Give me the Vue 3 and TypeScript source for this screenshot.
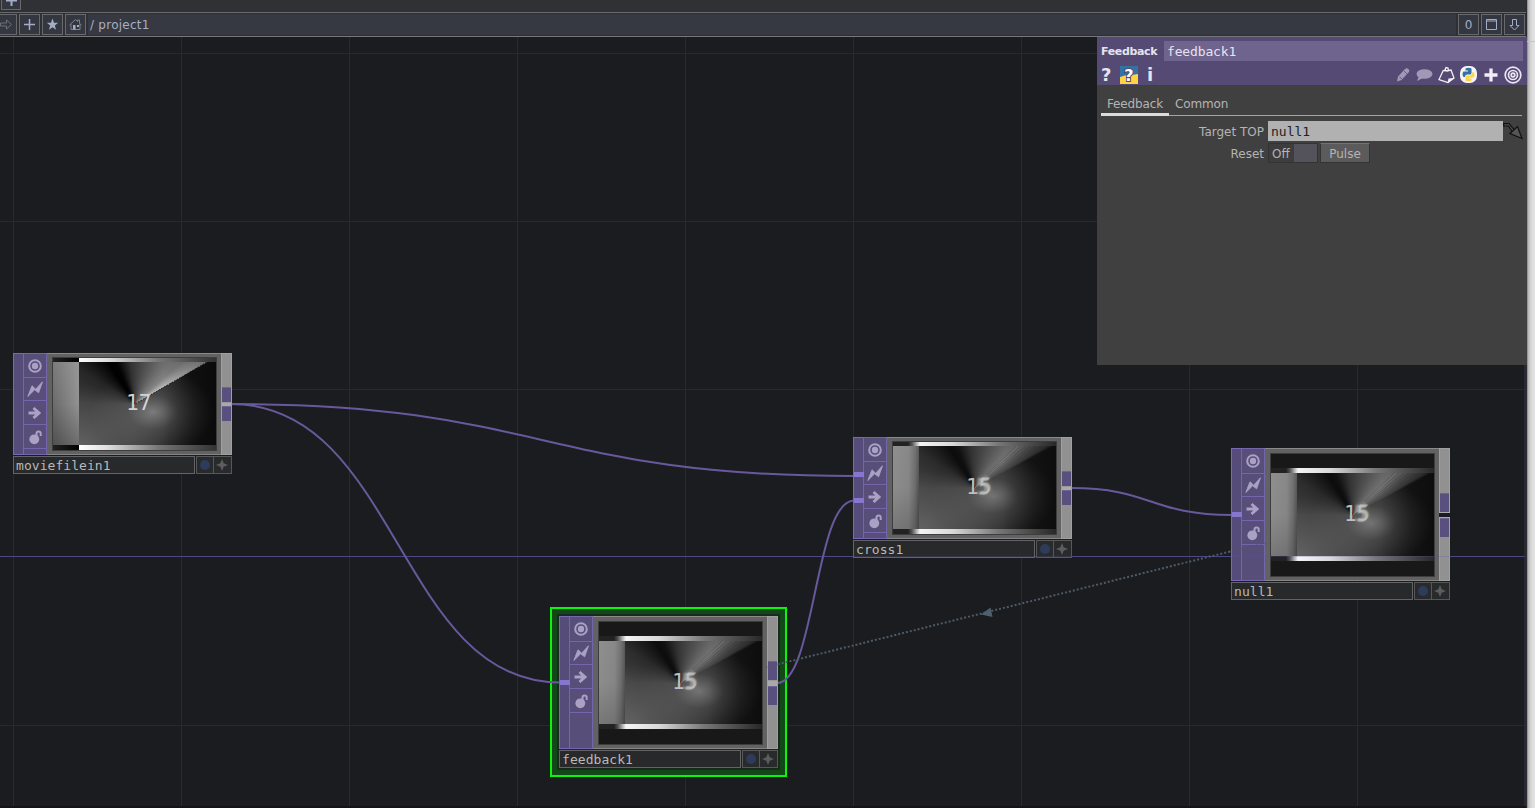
<script setup lang="ts">
interface OpNode {
  name: string
  x: number
  y: number
  tall: boolean
  inputs: number[]
  split: boolean
  soft: boolean
  count: [string, string]
}

const nodes: OpNode[] = [
  { name: 'moviefilein1', x: 13, y: 353, tall: false, inputs: [], split: false, soft: false, count: ['1', '7'] },
  { name: 'cross1', x: 853, y: 437, tall: false, inputs: [34, 60], split: false, soft: true, count: ['1', '5'] },
  { name: 'null1', x: 1231, y: 448, tall: true, inputs: [63], split: true, soft: true, count: ['1', '5'] },
  { name: 'feedback1', x: 559, y: 616, tall: true, inputs: [63], split: false, soft: true, count: ['1', '5'] },
]

const verticals = [13, 181, 349, 517, 685, 853, 1021, 1189, 1357]
const horizontals = [53, 221, 389, 725]
const rays = [0, 1, 2, 3, 4, 5, 6]
</script>

<template>
  <div class="app">
    <div class="main">
      <div class="topbar"><span class="btn tab"><svg width="19" height="19" viewBox="0 0 19 19"><path d="M9.5 4v11M4 9.5h11" class="ln thick" /></svg></span></div>
      <div class="toolbar">
        <span class="btn first"><svg width="19" height="19" viewBox="0 0 19 19"><path d="M3.5 8h6V5l5 4.5-5 4.5v-3h-6z" class="ln dim" /></svg></span>
        <span class="btn"><svg width="19" height="19" viewBox="0 0 19 19"><path d="M9.5 4v11M4 9.5h11" class="ln plus" /></svg></span>
        <span class="btn"><svg width="19" height="19" viewBox="0 0 19 19"><path d="M9.5 3.500l1.500 4.200h4.200l-3.400 2.700 1.300 4.400-3.600-2.600-3.600 2.600 1.300-4.400-3.400-2.700H8z" class="fill" /></svg></span>
        <span class="btn"><svg width="19" height="19" viewBox="0 0 19 19"><path d="M3.500 10l6-5.500 2 2V5h2v3.500l2 1.500M5 9v5.500h9V9" class="ln dim2" /><path d="M7 10h2.500v4.500H7zM11 10h2v2h-2z" class="fill" /></svg></span>
        <div class="path"><span>/ project1</span></div>
        <span class="btn zero">0</span>
        <span class="btn"><svg width="19" height="19" viewBox="0 0 19 19"><path d="M4.500 4.500h10v10h-10zM4 6h11" class="ln" /></svg></span>
        <span class="btn"><svg width="19" height="19" viewBox="0 0 19 19"><path d="M7.500 4.500h4v6h2.500l-4.500 4.500-4.500-4.500h2.500z" class="ln" /></svg></span>
      </div>
      <div class="network">
        <svg class="layer" width="1526" height="808" viewBox="0 0 1526 808">
          <g class="grid">
            <rect v-for="v in verticals" :key="'v' + v" :x="v" y="37" width="1" height="771" />
            <rect v-for="h in horizontals" :key="'h' + h" x="0" :y="h" width="1526" height="1" />
          </g>
          <rect x="0" y="556" width="1526" height="1" class="axis" />
          <rect x="1524" y="37" width="2" height="771" class="edge" />
          <rect x="0" y="806" width="1526" height="2" class="floor" />
        </svg>

        <div class="selection"><div class="selection-inner"></div></div>

        <svg class="layer" width="1526" height="808" viewBox="0 0 1526 808">
          <g class="wires">
            <path d="M231 404C542 404 542 476 854 476" />
            <path d="M231 404C398 404 398 682.500 560 682.500" />
            <path d="M1071 488C1151 488 1151 515 1232 515" />
            <path d="M777 683C815 683 815 500.500 854 500.500" />
          </g>
        </svg>

        <div v-for="n in nodes" :key="n.name" class="node" :class="{ tall: n.tall, split: n.split }" :style="{ left: n.x + 'px', top: n.y + 'px' }">
          <div class="body">
            <div class="inputs"><i v-for="i in n.inputs" :key="i" class="in" :style="{ top: i + 'px' }"></i></div>
            <div class="flags">
              <span class="flag"><svg width="16" height="16" viewBox="0 0 16 16"><circle cx="8" cy="8" r="5.800" class="ring" /><circle cx="8" cy="8" r="3.200" class="glyph" /></svg></span>
              <span class="flag"><svg width="16" height="16" viewBox="0 0 16 16"><path d="M.8 15.500L5 4.800l3.700 3.400L15.500.8 11.600 11.800 7.600 8.800z" class="glyph bolt" /></svg></span>
              <span class="flag"><svg width="16" height="16" viewBox="0 0 16 16"><path d="M1.500 8h11M6.500 3l5.500 5-5.500 5" class="arrow-bold" /></svg></span>
              <span class="flag"><svg width="16" height="16" viewBox="0 0 16 16"><circle cx="7.300" cy="10.300" r="4.900" class="glyph" /><path d="M9.500 7V4.600Q9.500 2.500 11.600 2.500T13.700 4.700V7" class="shackle" /></svg></span>
              <span class="rest"></span>
            </div>
            <div class="frame">
              <div class="view">
                <div class="strip" :class="{ soft: n.soft }"></div>
                <div class="picture" :class="{ soft: n.soft }">
                  <div class="shade"></div>
                  <svg width="163" height="83" viewBox="0 0 163 83">
                    <path v-if="!n.soft" d="M82 42L154 0" class="seam" />
                    <g v-else>
                      <path v-for="r in rays" :key="r" :d="`M${98 - r * 0.8} ${33 - r * 0.7}L${153 - r * 5} 0`" class="ray" />
                    </g>
                  </svg>
                  <div class="column"></div>
                </div>
                <div class="strip lower" :class="{ soft: n.soft }"></div>
                <div class="count" :class="{ soft: n.soft }">{{ n.count[0] }}<span>{{ n.count[1] }}</span></div>
              </div>
            </div>
            <div class="outputs"><i class="conn up"></i><i class="mid"></i><i class="conn down"></i></div>
          </div>
          <div class="label">
            <span class="title">{{ n.name }}</span>
            <span class="tool"><i class="dot"></i></span>
            <span class="tool last"><svg width="12" height="12" viewBox="0 0 12 12"><path d="M6 0l1.700 4.300L12 6 7.700 7.700 6 12 4.300 7.700 0 6l4.300-1.700z" class="star" /></svg></span>
          </div>
        </div>

        <svg class="layer" width="1526" height="808" viewBox="0 0 1526 808">
          <path d="M1230 551.500L779 664" class="link" />
          <path d="M1266 543L1230 551.500M779 664L765 667.500" class="link faint" />
          <path d="M981 614.500L990.500 607.500L992.500 617z" class="arrow" />
          <path d="M0 556.500H1526" class="axis-over" />
        </svg>

        <section class="panel">
          <header class="head">
            <div class="head-row"><b>Feedback</b><span class="opname">feedback1</span></div>
            <div class="head-icons">
              <b class="q">?</b>
              <svg class="pyq" width="18" height="18" viewBox="0 0 18 18"><rect width="18" height="18" class="py-blue" /><path d="M0 11Q5 9 9 9t9-1v10H0z" class="py-yellow" /><text x="9" y="15" text-anchor="middle" class="pyq-text">?</text></svg>
              <b class="info">i</b>
              <span class="grow"></span>
              <svg width="16" height="18" viewBox="0 0 16 18"><path d="M2 15.500l1-5 7-7.500q2-1.500 3.500 0t.5 3L6.500 14z" class="pale" /><path d="M4.500 11l2.500 2M9 5l3 3" class="cut" /></svg>
              <svg width="18" height="18" viewBox="0 0 18 18"><ellipse cx="9.500" cy="8" rx="8" ry="4.800" class="pale" /><path d="M4 10L2 15l6-3z" class="pale" /></svg>
              <svg width="18" height="18" viewBox="0 0 18 18"><path d="M6.500 4L2 13.500l9 3 6-4.500-3-8-2.500.5" class="tag" /><path d="M6.500 4.500l5 .5M8 4l1-2.500 2 .5.500 3" class="tag" /><path d="M10.500 17l1-4.500 5.500-.5z" class="white" /></svg>
              <svg width="19" height="19" viewBox="0 0 19 19"><rect x="1" y="1" width="17" height="17" rx="7" class="white" /><path d="M6.500 3.500q3-1.500 6 0V8q0 1.500-2 1.500H8Q6 9.500 6 12H4.500q-2-3 0-5.500H9V5.500H6.500z" class="py-blue" /><path d="M12.500 15.500q-3 1.500-6 0V12q0-1.500 2-1.500H11q2.500-.5 2.500-3.500h1q2 3 0 5.500H10v1h2.500z" class="py-yellow" /></svg>
              <svg width="18" height="18" viewBox="0 0 18 18"><path d="M9 2.500v13M2.500 9h13" class="bigplus" /></svg>
              <svg width="18" height="18" viewBox="0 0 18 18"><circle cx="9" cy="9" r="7.800" class="target" /><circle cx="9" cy="9" r="4.500" class="target" /><circle cx="9" cy="9" r="1.800" class="target" /></svg>
            </div>
          </header>
          <nav class="tabs"><span class="active">Feedback</span><span class="other">Common</span></nav>
          <div class="row">
            <label>Target TOP</label><div class="input">null1</div>
            <svg class="pick" width="20" height="20" viewBox="0 0 20 20"><path d="M10 11.500L5.500 5H.7V2.600H6L11.500 9z" class="pick-head" /><path d="M7 12.500L14.500 5.500l4.500 12z" class="pick-head" /></svg>
          </div>
          <div class="row reset">
            <label>Reset</label><div class="toggle"><span>Off</span><i></i></div><div class="pulse">Pulse</div>
          </div>
        </section>
      </div>
    </div>
    <div class="outside"></div>
  </div>
</template>

<style>
body { margin: 0; overflow: hidden; background: #1b1c20; }
</style>

<style scoped>
.app { width: 1535px; height: 808px; display: flex; position: relative; font-family: "DejaVu Sans", Verdana, sans-serif; overflow: hidden; }
.app * { box-sizing: border-box; }
svg { display: block; fill: none; }
.main { width: 1527px; height: 808px; border-right: 1px solid #2c2c33; display: flex; flex-direction: column; flex: none; }
.outside { flex: 1; background: linear-gradient(90deg, #777 0, #b5b5b5 1px, #d8d8d8 4px, #e4e4e4 8px); padding-top: 41px; }
.outside::before { content: ""; display: block; height: 1px; background: #c4c4c4; }
.topbar { height: 12px; background: #2f3135; overflow: hidden; flex: none; padding-left: 1px; }
.topbar .tab { width: 20px; margin-top: -10px; height: 20px; }
.toolbar { height: 25px; flex: none; border-top: 1px solid #68696d; border-bottom: 1px solid #77777a; background: #2e3033; display: flex; align-items: center; gap: 2px; padding-right: 1px; }
.btn { width: 21px; height: 21px; border: 1px solid #67696c; background: #343740; display: flex; align-items: center; justify-content: center; flex: none; color: #a4adc8; }
.btn svg { flex: none; }
.btn.first { width: 17px; border-left: 0; justify-content: flex-end; }
.zero { font-size: 12px; }
.path { flex: 1; height: 21px; background: #363941; color: #a9aec0; font-size: 12px; line-height: 22px; padding-left: 2px; letter-spacing: .25px; }
.ln { stroke: #a4adc8; stroke-width: 1; }
.thick { stroke-width: 2; }
.plus { stroke-width: 1.500; }
.dim { stroke: #6c7079; }
.dim2 { stroke: #7d828d; }
.fill { fill: #a4adc8; }
.network { flex: 1; background: #1b1c20; }
.layer { position: absolute; left: 0; top: 0; pointer-events: none; clip-path: inset(37px 0 0 0); }
.grid rect { fill: #292a2f; }
.axis { fill: #48447b; }
.edge { fill: #292936; }
.floor { fill: #171119; }
.axis-over { stroke: #5a55a0; opacity: .25; }
.selection { position: absolute; left: 550px; top: 607px; width: 237px; height: 170px; border: 2px solid #0bf50b; background: #124817; padding: 5px; }
.selection-inner { height: 100%; background: #172a1c; }
.wires path { stroke: #68599c; stroke-width: 2; }
.link { stroke: #4c5b68; stroke-width: 2; stroke-dasharray: 2 2; }
.faint { opacity: .5; }
.arrow { fill: #4d6070; }

.node { position: absolute; width: 219px; display: flex; flex-direction: column; gap: 1px; }
.body { height: 102px; display: flex; }
.tall .body { height: 133px; }
.inputs { width: 10px; background: #564c79; border: 1px solid #7a69b8; border-right: 0; position: relative; }
.in { position: absolute; left: 0; width: 10px; height: 5px; background: #8776cd; z-index: 1; }
.flags { width: 24px; background: #574e79; border: 1px solid #7465ad; display: flex; flex-direction: column; }
.flag { height: 24px; flex: none; border-bottom: 1px solid #7465ad; display: flex; align-items: center; justify-content: center; }
.flag:nth-child(2) { height: 23px; }
.tall .flag:nth-child(1) { height: 25px; }
.rest { flex: 1; }
.glyph { fill: #aaa2c4; }
.bolt { stroke: #aaa2c4; stroke-width: .9; }
.arrow-bold { stroke: #aaa2c4; stroke-width: 3; }
.ring, .shackle { stroke: #aaa2c4; stroke-width: 2; }
.frame { width: 174px; background: #626262; border-top: 1px solid #8a8a8a; border-bottom: 1px solid #858585; padding: 3px 4px 3px 5px; }
.tall .frame { padding: 4px 4px 3px 5px; }
.view { height: 100%; border: 1px solid #3d3d3d; background: #181818; position: relative; display: flex; flex-direction: column; }
.tall .view { padding-top: 14px; }
.strip { height: 4px; flex: none; background: linear-gradient(90deg, #222 0, #000 26px, #fff 26px, #ddd 55px, #777 105px, #333 163px); }
.strip.soft { background: linear-gradient(90deg, #222 0, #222 15px, #555 19px, #bbb 24px, #f5f5f5 27px, #d8d8d8 60px, #777 105px, #282828 163px); }
.strip.lower, .tall .strip { height: 5px; }
.picture { height: 83px; flex: none; position: relative; overflow: hidden; }
.picture svg { position: absolute; inset: 0; }
.shade { position: absolute; inset: 0; background:
  linear-gradient(90deg, transparent 110px, rgba(0,0,0,.5) 163px),
  conic-gradient(from 270deg at 82px 42px, transparent 0deg, rgba(0,0,0,.35) 32deg, rgba(0,0,0,1) 58deg, rgba(0,0,0,.95) 66deg, rgba(50,50,50,.9) 84deg, rgba(95,95,95,.9) 112deg, rgba(140,140,140,.9) 138deg, rgba(205,205,205,.9) 149.800deg, transparent 150deg),
  radial-gradient(ellipse 62px 44px at 100px 50px, rgba(150,150,150,.75) 0, rgba(115,115,115,.4) 40%, transparent 100%),
  radial-gradient(ellipse 90px 60px at 26px 83px, rgba(120,120,120,.6), transparent),
  linear-gradient(90deg, #3c3c3c 26px, #343434 80px, #151515 140px); }
.soft .shade { background:
  linear-gradient(90deg, transparent 110px, rgba(0,0,0,.45) 163px),
  conic-gradient(from 270deg at 82px 42px, transparent 0deg, rgba(12,12,12,.35) 32deg, rgba(12,12,12,1) 58deg, rgba(14,14,14,.95) 66deg, rgba(50,50,50,.9) 84deg, rgba(88,88,88,.9) 112deg, rgba(125,125,125,.9) 136deg, rgba(85,85,85,.7) 149.800deg, transparent 152deg),
  radial-gradient(ellipse 62px 44px at 100px 50px, rgba(140,140,140,.75) 0, rgba(105,105,105,.4) 40%, transparent 100%),
  radial-gradient(ellipse 90px 60px at 26px 83px, rgba(120,120,120,.6), transparent),
  linear-gradient(90deg, #404040 26px, #343434 80px, #181818 140px); }
.column { position: absolute; left: 0; top: 0; width: 26px; height: 83px; background: linear-gradient(180deg, rgba(160,160,160,.3), transparent 50%, rgba(0,0,0,.25)), linear-gradient(90deg, #6b6b6b, #929292); z-index: 1; }
.soft .column { background: linear-gradient(180deg, rgba(160,160,160,.12), transparent 50%, rgba(0,0,0,.15)), linear-gradient(90deg, #8c8c8c, #858585 60%, #6c6c6c 85%, #505050); }
.seam { stroke: #222; stroke-width: 1; stroke-dasharray: 2 1; }
.ray { stroke: #2c2c2c; stroke-width: .6; opacity: .4; }
.count { position: absolute; left: 73px; top: 50%; height: 24px; line-height: 24px; margin-top: -13px; font-family: "DejaVu Sans Mono", monospace; font-size: 21px; color: #d3d3d3; z-index: 2; white-space: nowrap; }
.count.soft { color: #bfbfbf; }
.count.soft span { color: rgba(200,200,200,.7); text-shadow: -1px 1px 0 rgba(190,190,190,.5), 1px -1px 0 rgba(190,190,190,.45), -3px 0 2px rgba(190,190,190,.6), 0 0 4px rgba(190,190,190,.6); }
.outputs { width: 11px; background: #919191; border: 1px solid #a0a0a0; display: flex; flex-direction: column; justify-content: center; }
.conn { height: 15px; background: #5a507f; border-top: 1px solid #6e6692; flex: none; }
.mid { height: 4px; background: #aaa; flex: none; border-top: 1px solid #999; }
.tall .conn { height: 19px; }
.tall .mid { height: 6px; }
.split .mid { background: #1b1c20; border-top: 1px solid #aaa; border-bottom: 1px solid #aaa; margin: 0 -1px; }
.label { display: flex; height: 18px; }
.title { width: 182px; border: 1px solid #626467; background: #27292a; color: #b9b9b9; font: 13px/17px "DejaVu Sans Mono", monospace; padding-left: 2px; margin-right: 1px; letter-spacing: .05px; }
.tool { width: 18px; border: 1px solid #555759; background: #292a2c; display: flex; align-items: center; justify-content: center; padding-right: 1px; }
.tool.last { border-left-width: 0; padding-right: 2px; }
.tool svg, .dot { flex: none; }
.dot { width: 10px; height: 10px; border-radius: 50%; background: #2d3c5a; }
.star { fill: #5d5d5d; }

.panel { position: absolute; left: 1097px; top: 37px; width: 430px; height: 328px; background: #404040; color: #b4b4b4; font-size: 12px; }
.head { height: 48px; background: #544a73; color: #e6e3ee; }
.head-row { display: flex; align-items: center; height: 28px; padding: 0 4px; }
.head-row b { width: 63px; font-size: 11px; letter-spacing: -.35px; }
.opname { flex: none; width: 359px; height: 20px; background: #6e648d; font: 13px/21px "DejaVu Sans Mono", monospace; letter-spacing: -.15px; padding-left: 3px; }
.head-icons { display: flex; align-items: center; height: 19px; padding-left: 4px; padding-right: 5px; gap: 4px; }
.q { font-size: 18px; width: 15px; line-height: 20px; }
.pyq { flex: none; }
.pyq-text { font: bold 16px "DejaVu Sans", sans-serif; fill: #fff; stroke: #544a73; stroke-width: 2px; paint-order: stroke; }
.info { font-size: 18px; line-height: 20px; margin-left: 5px; }
.grow { flex: 1; }
.py-blue { fill: #3372a5; }
.py-yellow { fill: #ffd343; }
.pale { fill: #9f98b6; }
.cut { stroke: #6a608a; stroke-width: 1; }
.tag { stroke: #f4f4f4; stroke-width: 1.300; }
.white { fill: #f4f4f4; }
.bigplus { stroke: #f0edf6; stroke-width: 3.300; }
.target { stroke: #eae7f2; stroke-width: 1.700; }
.tabs { height: 21px; margin: 10px 5px 0 4px; border-bottom: 1px solid #a5a5a5; display: flex; line-height: 19px; }
.active { width: 68px; height: 21px; padding-left: 6px; border-bottom: 3px solid #dcdcdc; letter-spacing: -.15px; }
.other { padding-left: 6px; letter-spacing: -.15px; }
.row { display: flex; height: 20px; margin-top: 5px; }
.row label { width: 167px; text-align: right; margin-right: 4px; line-height: 22px; }
.input { width: 235px; height: 20px; background: #b1b1b1; color: #222; font: 13px/21px "DejaVu Sans Mono", monospace; padding-left: 3px; }
.pick-head { fill: #555; stroke: #111; stroke-width: 1.200; }
.reset { margin-top: 2px; }
.toggle { width: 50px; height: 20px; border: 1px solid #333; background: #3d3d3d; display: flex; justify-content: space-between; line-height: 20px; padding-left: 3px; }
.toggle i { width: 23px; background: #54535b; }
.pulse { width: 50px; height: 20px; margin-left: 2px; background: #5b5b5b; border: 1px solid #333; border-top-color: #727272; text-align: center; line-height: 20px; }
</style>
